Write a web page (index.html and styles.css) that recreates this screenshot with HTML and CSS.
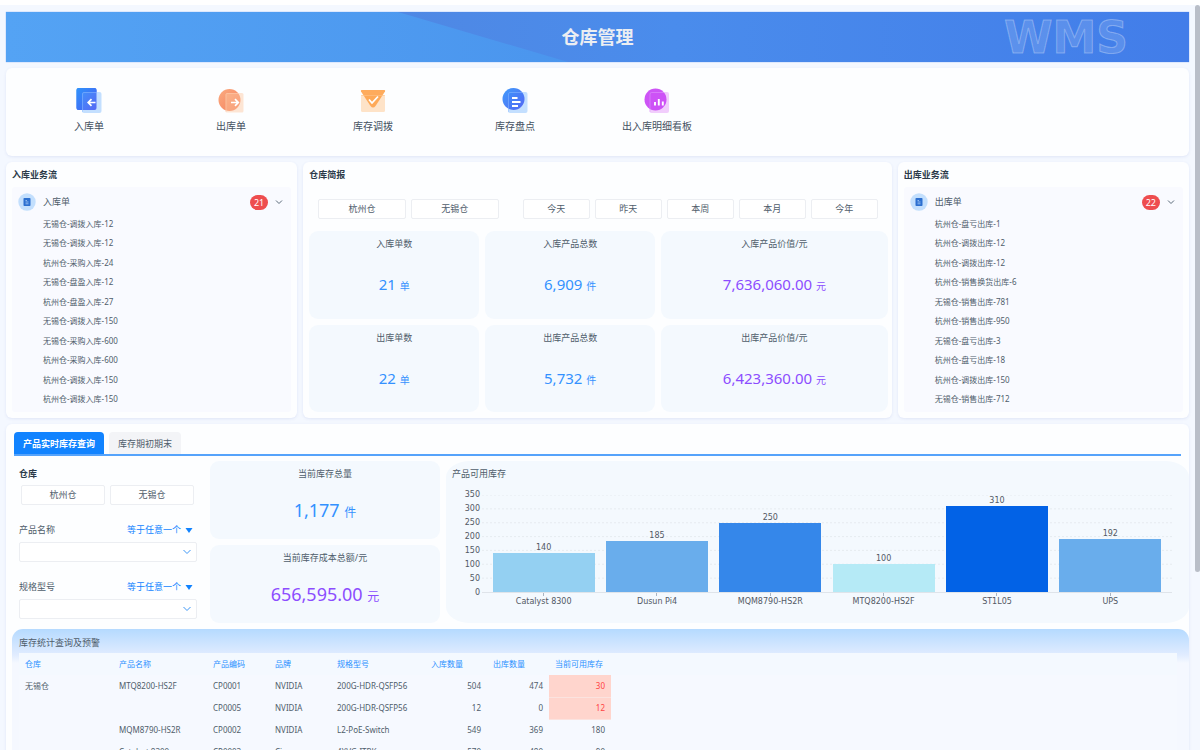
FILE: index.html
```html
<!DOCTYPE html>
<html lang="zh-CN">
  <head>
    <meta charset="utf-8" />
    <title>仓库管理</title>
    <link rel="stylesheet" href="styles.css">
  </head>
  <body>
    <main class="page">
      <header class="banner">
        <svg class="banner-bg" viewBox="0 0 1183 50" preserveAspectRatio="none" aria-hidden="true">
          <defs>
            <linearGradient id="shade" x1="0" x2="1" y1="0" y2="0">
              <stop offset="0" stop-color="#4f88e4" />
              <stop offset="0.35" stop-color="#4a8cec" />
              <stop offset="1" stop-color="#427de9" />
            </linearGradient>
          </defs>
          <path d="M392 0H1183V50H562Z" fill="url(#shade)" />
        </svg>
        <h1 class="banner-title">仓库管理</h1>
        <span class="banner-logo">WMS</span>
      </header>

      <nav class="card shortcuts">
        <a class="shortcut" href="#in">
          <svg width="26" height="26" viewBox="0 0 26 26">
            <defs>
              <linearGradient id="g1" x1="0" y1="0" x2="1" y2="1">
                <stop offset="0" stop-color="#2f93fb" />
                <stop offset="1" stop-color="#4a5cf3" />
              </linearGradient>
            </defs>
            <rect x="6" y="5" width="19.500" height="21" rx="2" fill="#c3dfff" />
            <rect x="0.500" y="1" width="20" height="22" rx="2" fill="url(#g1)" fill-opacity="0.9" />
            <path d="M0.500 3q0-2 2-2H18.500q2 0 2 2V5H8q-2 0-2 2V23H2.500q-2 0-2-2Z" fill="url(#g1)" />
            <path d="M6.500 25V7q0-1.500 1.500-1.500H20" fill="none" stroke="#8fbdff" stroke-opacity="0.5" />
            <path d="M19.500 15.500H12.500M15.500 12.200L12.200 15.500L15.500 18.800" fill="none" stroke="#fff" stroke-width="1.700" />
          </svg>
          <span>入库单</span>
        </a>
        <a class="shortcut" href="#out">
          <svg width="26" height="26" viewBox="0 0 26 26">
            <defs>
              <linearGradient id="g2" x1="0" y1="0" x2="1" y2="1">
                <stop offset="0" stop-color="#fbab80" />
                <stop offset="1" stop-color="#f47f5c" />
              </linearGradient>
            </defs>
            <circle cx="11.500" cy="13" r="11" fill="url(#g2)" />
            <rect x="7.500" y="6" width="18" height="19.500" rx="1.500" fill="#fcc7a0" fill-opacity="0.45" />
            <path d="M8 25V7.500q0-1 1-1H21" fill="none" stroke="#fdcfb4" stroke-opacity="0.5" />
            <path d="M13 15.500H20M17 12.200L20.300 15.500L17 18.800" fill="none" stroke="#fff" stroke-width="1.700" />
          </svg>
          <span>出库单</span>
        </a>
        <a class="shortcut" href="#transfer">
          <svg width="26" height="26" viewBox="0 0 26 26">
            <rect x="1" y="8" width="24" height="17" rx="1.500" fill="#fee3c8" />
            <path d="M1.500 3H24.500Q25.500 3 25 4.500L15.500 19Q13 22 10.500 19L1 4.500Q0.500 3 1.500 3Z" fill="#fea24a" fill-opacity="0.9" />
            <path d="M1 8.500H25" stroke="#fec48c" stroke-opacity="0.6" />
            <path d="M9 12.500L12 16L18 9.500" fill="none" stroke="#fff" stroke-width="1.800" />
          </svg>
          <span>库存调拨</span>
        </a>
        <a class="shortcut" href="#stocktake">
          <svg width="26" height="26" viewBox="0 0 26 26">
            <rect x="6" y="5" width="19.500" height="21" rx="2" fill="#c3dfff" />
            <circle cx="11.500" cy="12" r="11" fill="url(#g1)" fill-opacity="0.92" />
            <path d="M6.500 25V7q0-1.500 1.500-1.500H20" fill="none" stroke="#8fbdff" stroke-opacity="0.5" />
            <path d="M10 11H15.500M10 15H18.500M10 19H16" stroke="#fff" stroke-width="2" />
          </svg>
          <span>库存盘点</span>
        </a>
        <a class="shortcut" href="#board">
          <svg width="26" height="26" viewBox="0 0 26 26">
            <rect x="5.500" y="5" width="19.500" height="21" rx="2" fill="#f1cdfc" />
            <circle cx="11.500" cy="12.500" r="11" fill="#ca4bf6" fill-opacity="0.95" />
            <path d="M6 25V7q0-1.500 1.500-1.500H20" fill="none" stroke="#e2a0fb" stroke-opacity="0.5" />
            <path d="M11 18.500V15M14.800 18.500V12M18.800 18.500V14.500" stroke="#fff" stroke-width="1.900" />
          </svg>
          <span>出入库明细看板</span>
        </a>
      </nav>

      <div class="overview">
        <section class="card flow">
          <h2 class="card-title">入库业务流</h2>
          <div class="flow-panel">
            <div class="flow-head">
              <svg width="18" height="18" viewBox="0 0 18 18" aria-hidden="true">
                <circle cx="9" cy="9" r="8.700" fill="#c3dffd" />
                <rect x="5.500" y="5" width="7" height="8" rx="0.800" fill="#2c6fd0" />
                <path d="M7.500 7.500H9M7.500 9H10.500M7.500 10.800H10.500" stroke="#a9cdf8" stroke-width="0.800" />
              </svg>
              <span class="flow-name">入库单</span>
              <span class="badge">21</span>
              <button class="toggle" aria-label="收起入库单">
                <svg width="8" height="8" viewBox="0 0 8 8"><path d="M1 2.500L4 5.500L7 2.500" fill="none" stroke="#5b6a79" /></svg>
              </button>
            </div>
            <ul class="flow-list">
              <li>无锡仓-调拨入库-12</li>
              <li>无锡仓-调拨入库-12</li>
              <li>杭州仓-采购入库-24</li>
              <li>无锡仓-盘盈入库-12</li>
              <li>杭州仓-盘盈入库-27</li>
              <li>无锡仓-调拨入库-150</li>
              <li>无锡仓-采购入库-600</li>
              <li>杭州仓-采购入库-600</li>
              <li>杭州仓-调拨入库-150</li>
              <li>杭州仓-调拨入库-150</li>
            </ul>
          </div>
        </section>

        <section class="card brief">
          <h2 class="card-title">仓库简报</h2>
          <div class="brief-filters">
            <div class="btn-group btn-group-house">
              <button class="btn">杭州仓</button>
              <button class="btn">无锡仓</button>
            </div>
            <div class="btn-group btn-group-date">
              <button class="btn">今天</button>
              <button class="btn">昨天</button>
              <button class="btn">本周</button>
              <button class="btn">本月</button>
              <button class="btn">今年</button>
            </div>
          </div>
          <div class="brief-stats">
            <div class="stat">
              <h3>入库单数</h3>
              <p class="blue">21 <small>单</small></p>
            </div>
            <div class="stat">
              <h3>入库产品总数</h3>
              <p class="blue">6,909 <small>件</small></p>
            </div>
            <div class="stat">
              <h3>入库产品价值/元</h3>
              <p class="purple">7,636,060.00 <small>元</small></p>
            </div>
            <div class="stat">
              <h3>出库单数</h3>
              <p class="blue">22 <small>单</small></p>
            </div>
            <div class="stat">
              <h3>出库产品总数</h3>
              <p class="blue">5,732 <small>件</small></p>
            </div>
            <div class="stat">
              <h3>出库产品价值/元</h3>
              <p class="purple">6,423,360.00 <small>元</small></p>
            </div>
          </div>
        </section>

        <section class="card flow">
          <h2 class="card-title">出库业务流</h2>
          <div class="flow-panel">
            <div class="flow-head">
              <svg width="18" height="18" viewBox="0 0 18 18" aria-hidden="true">
                <circle cx="9" cy="9" r="8.700" fill="#c3dffd" />
                <rect x="5.500" y="5" width="7" height="8" rx="0.800" fill="#2c6fd0" />
                <path d="M7.500 7.500H9M7.500 9H10.500M7.500 10.800H10.500" stroke="#a9cdf8" stroke-width="0.800" />
              </svg>
              <span class="flow-name">出库单</span>
              <span class="badge">22</span>
              <button class="toggle" aria-label="收起出库单">
                <svg width="8" height="8" viewBox="0 0 8 8"><path d="M1 2.500L4 5.500L7 2.500" fill="none" stroke="#5b6a79" /></svg>
              </button>
            </div>
            <ul class="flow-list">
              <li>杭州仓-盘亏出库-1</li>
              <li>杭州仓-调拨出库-12</li>
              <li>杭州仓-调拨出库-12</li>
              <li>杭州仓-销售换货出库-6</li>
              <li>无锡仓-销售出库-781</li>
              <li>杭州仓-销售出库-950</li>
              <li>无锡仓-盘亏出库-3</li>
              <li>杭州仓-盘亏出库-18</li>
              <li>杭州仓-调拨出库-150</li>
              <li>无锡仓-销售出库-712</li>
            </ul>
          </div>
        </section>
      </div>

      <section class="card stock">
        <div class="tabs" role="tablist">
          <button class="tab active" role="tab" aria-selected="true">产品实时库存查询</button>
          <button class="tab" role="tab" aria-selected="false">库存期初期末</button>
        </div>

        <div class="stock-body">
          <form class="filters">
            <fieldset class="filter-house">
              <legend>仓库</legend>
              <div class="btn-row">
                <button type="button" class="btn">杭州仓</button>
                <button type="button" class="btn">无锡仓</button>
              </div>
            </fieldset>
            <div class="field">
              <div class="field-head">
                <label for="product">产品名称</label>
                <span class="match">
                  <select aria-label="产品名称匹配方式"><option>等于任意一个</option></select>
                  <svg width="8" height="5" viewBox="0 0 8 5"><path d="M0.500 0H7.500L4 5Z" fill="#1183ff" /></svg>
                </span>
              </div>
              <div class="picker">
                <select id="product"><option></option></select>
                <svg width="8" height="8" viewBox="0 0 8 8"><path d="M0.500 2L4 5.500L7.500 2" fill="none" stroke="#3d96f5" /></svg>
              </div>
            </div>
            <div class="field">
              <div class="field-head">
                <label for="model">规格型号</label>
                <span class="match">
                  <select aria-label="规格型号匹配方式"><option>等于任意一个</option></select>
                  <svg width="8" height="5" viewBox="0 0 8 5"><path d="M0.500 0H7.500L4 5Z" fill="#1183ff" /></svg>
                </span>
              </div>
              <div class="picker">
                <select id="model"><option></option></select>
                <svg width="8" height="8" viewBox="0 0 8 8"><path d="M0.500 2L4 5.500L7.500 2" fill="none" stroke="#3d96f5" /></svg>
              </div>
            </div>
          </form>

          <div class="totals">
            <div class="stat big">
              <h3>当前库存总量</h3>
              <p class="blue">1,177 <small>件</small></p>
            </div>
            <div class="stat big">
              <h3>当前库存成本总额/元</h3>
              <p class="purple">656,595.00 <small>元</small></p>
            </div>
          </div>

          <div class="chart">
            <h3>产品可用库存</h3>
            <div class="chart-area">
              <div class="axis-y">
                <span>350</span><span>300</span><span>250</span><span>200</span><span>150</span><span>100</span><span>50</span><span>0</span>
              </div>
              <div class="plot">
                <svg class="grid-lines" aria-hidden="true">
                  <g stroke="#e6ebf0" stroke-dasharray="2 2">
                    <line x1="0" x2="100%" y1="0" y2="0" />
                    <line x1="0" x2="100%" y1="14.300%" y2="14.300%" />
                    <line x1="0" x2="100%" y1="28.600%" y2="28.600%" />
                    <line x1="0" x2="100%" y1="42.900%" y2="42.900%" />
                    <line x1="0" x2="100%" y1="57.100%" y2="57.100%" />
                    <line x1="0" x2="100%" y1="71.400%" y2="71.400%" />
                    <line x1="0" x2="100%" y1="85.700%" y2="85.700%" />
                  </g>
                </svg>
                <div class="col"><b>140</b><i class="bar c2" style="height: 40%"></i></div>
                <div class="col"><b>185</b><i class="bar c3" style="height: 52.9%"></i></div>
                <div class="col"><b>250</b><i class="bar c4" style="height: 71.4%"></i></div>
                <div class="col"><b>100</b><i class="bar c1" style="height: 28.6%"></i></div>
                <div class="col"><b>310</b><i class="bar c5" style="height: 88.6%"></i></div>
                <div class="col"><b>192</b><i class="bar c3" style="height: 54.9%"></i></div>
              </div>
              <div class="axis-x">
                <span>Catalyst 8300</span><span>Dusun Pi4</span><span>MQM8790-HS2R</span><span>MTQ8200-HS2F</span><span>ST1L05</span><span>UPS</span>
              </div>
            </div>
          </div>
        </div>

        <div class="report">
          <h3>库存统计查询及预警</h3>
          <div class="table-wrap">
            <table>
              <colgroup>
                <col class="w-l"><col class="w-l"><col class="w-s"><col class="w-s"><col class="w-l"><col class="w-s"><col class="w-s"><col class="w-s"><col>
              </colgroup>
              <thead>
                <tr>
                  <th>仓库</th><th>产品名称</th><th>产品编码</th><th>品牌</th><th>规格型号</th><th>入库数量</th><th>出库数量</th><th>当前可用库存</th><td></td>
                </tr>
              </thead>
              <tbody>
                <tr>
                  <td>无锡仓</td><td>MTQ8200-HS2F</td><td>CP0001</td><td>NVIDIA</td><td>200G-HDR-QSFP56</td><td class="num">504</td><td class="num">474</td><td class="num warn">30</td><td></td>
                </tr>
                <tr>
                  <td></td><td></td><td>CP0005</td><td>NVIDIA</td><td>200G-HDR-QSFP56</td><td class="num">12</td><td class="num">0</td><td class="num warn">12</td><td></td>
                </tr>
                <tr>
                  <td></td><td>MQM8790-HS2R</td><td>CP0002</td><td>NVIDIA</td><td>L2-PoE-Switch</td><td class="num">549</td><td class="num">369</td><td class="num">180</td><td></td>
                </tr>
                <tr>
                  <td></td><td>Catalyst 8300</td><td>CP0003</td><td>Cisco</td><td>4XVG-ITRK</td><td class="num">570</td><td class="num">480</td><td class="num">90</td><td></td>
                </tr>
              </tbody>
            </table>
          </div>
        </div>
      </section>
    </main>
    <div class="scrollbar" aria-hidden="true"></div>
  </body>
</html>
```

FILE: styles.css
```css
* {
  box-sizing: border-box;
}
html,
body {
  margin: 0;
  padding: 0;
}
body {
  height: 100vh;
  overflow: hidden;
  background: #f4f8ff;
  border-top: 5px solid #fff;
  font-family: 'Noto Sans', 'Noto Sans CJK SC', sans-serif;
  font-size: 9px;
  line-height: 12px;
  color: #4f5d6b;
}
h1,
h2,
h3,
p,
ul {
  margin: 0;
  padding: 0;
  font-size: 9px;
  font-weight: 400;
}
button,
select {
  font: inherit;
  color: inherit;
  margin: 0;
  padding: 0;
  border: 0;
  background: none;
}
.page {
  display: flex;
  flex-direction: column;
  gap: 6px;
  padding: 7px 11px 0 6px;
}
.card {
  background: #fdfeff;
  border-radius: 6px;
  box-shadow: 0 1px 3px rgba(90, 110, 190, 0.12);
}
.scrollbar {
  position: absolute;
  top: 5px;
  right: 0;
  width: 5px;
  height: 75.6%;
  border-radius: 3px;
  background: #b9bec8;
}

/* banner */
.banner {
  position: relative;
  display: flex;
  align-items: center;
  justify-content: center;
  height: 50px;
  background: linear-gradient(90deg, #54a3f4, #4b96ee 45%, #427de9);
  box-shadow: 0 0 1px #6d9df0;
}
.banner-bg {
  position: absolute;
  width: 100%;
  height: 100%;
}
.banner-title {
  position: relative;
  font-size: 18px;
  line-height: 24px;
  font-weight: 700;
  color: #eceef2;
}
.banner-logo {
  position: absolute;
  right: 61px;
  top: 0;
  font-family: 'DejaVu Sans', sans-serif;
  font-size: 44px;
  line-height: 51px;
  font-weight: 700;
  color: rgba(255, 255, 255, 0.14);
  -webkit-text-stroke: 1px rgba(255, 255, 255, 0.3);
}

/* shortcuts */
.shortcuts {
  display: grid;
  grid-template-columns: repeat(8, 1fr);
  padding: 19px 35px 22px 12px;
}
.shortcut {
  display: flex;
  flex-direction: column;
  align-items: center;
  gap: 6px;
  font-size: 10px;
  line-height: 15px;
  color: #44515f;
  text-decoration: none;
}

/* overview */
.overview {
  display: grid;
  grid-template-columns: repeat(4, 1fr);
  gap: 6px;
}
.card-title {
  padding-top: 7px;
  font-weight: 700;
  color: #2b3a49;
}
.flow {
  padding: 0 6px 6px;
}
.flow-panel {
  margin-top: 6px;
  padding: 6px 6px 3px;
  background: #f9faff;
  border-radius: 3px;
}
.flow-head {
  display: flex;
  align-items: center;
  height: 18px;
}
.flow-name {
  flex: 1;
  padding-left: 7px;
}
.badge {
  padding: 0 4px;
  border-radius: 8px;
  background: #ee4d4f;
  color: #fff;
  font-size: 9px;
  line-height: 15px;
}
.toggle {
  display: flex;
  margin: 0 2px 0 7px;
}
.flow-list {
  display: grid;
  grid-auto-rows: 1fr;
  height: 198px;
  padding: 3px 0 0 25px;
  list-style: none;
  font-size: 8px;
}
.flow-list li {
  display: flex;
  align-items: center;
}

/* brief */
.brief {
  grid-column: span 2;
  display: flex;
  flex-direction: column;
  padding: 0 4px 6px 6px;
}
.brief-filters {
  display: flex;
  gap: 24px;
  padding: 18px 10px 12px 9px;
}
.btn-group {
  display: flex;
  gap: 5px;
}
.btn-group-house {
  flex: 181;
}
.btn-group-date {
  flex: 356;
}
.btn {
  flex: 1;
  height: 20px;
  border: 1px solid #eceef2;
  border-radius: 2px;
  background: #fff;
}
.brief-stats {
  flex: 1;
  display: grid;
  grid-template-columns: 3fr 3fr 4fr;
  grid-auto-rows: 1fr;
  gap: 6px;
}
.stat {
  display: flex;
  flex-direction: column;
  padding: 7px 6px;
  border-radius: 9px;
  background: #f4f9fe;
  text-align: center;
}
.stat p {
  margin-top: 22px;
  font-size: 15px;
  line-height: 24px;
}
.stat small {
  font-size: 10px;
}
.stat.big p {
  margin-top: 18px;
  font-size: 18px;
}
.stat.big small {
  font-size: 12px;
}
.blue {
  color: #3391ff;
}
.purple {
  color: #8c4dff;
}

/* stock */
.stock {
  padding: 8px 0 0 8px;
}
.tabs {
  display: flex;
  gap: 5px;
  margin-right: 8px;
  border-bottom: 2px solid #55a3fb;
}
.tab {
  height: 22px;
  padding: 1px 9px 0;
  border-radius: 4px 4px 0 0;
  background: #f3f4f7;
}
.tab.active {
  background: #1183ff;
  color: #fff;
  font-weight: 700;
}
.stock-body {
  display: grid;
  grid-template-columns: 190px 230px 1fr;
  gap: 6px;
  height: 167px;
  padding: 5px 0 0;
}
.filters {
  display: flex;
  flex-direction: column;
  gap: 19px;
  padding: 7px 7px 0 5px;
}
.filter-house {
  margin: 0;
  padding: 0 3px 0 2px;
  border: 0;
}
.filter-house legend {
  margin-left: -2px;
  padding: 0;
  font-weight: 700;
  color: #2b3a49;
}
.btn-row {
  display: flex;
  gap: 5px;
  padding-top: 5px;
}
.field-head {
  display: flex;
  justify-content: space-between;
  height: 12px;
  margin-bottom: 6px;
}
.match {
  display: flex;
  align-items: center;
  gap: 3px;
  padding-right: 4px;
  color: #1183ff;
}
.match select,
.picker select {
  appearance: none;
}
.picker {
  position: relative;
}
.picker select {
  display: block;
  width: 100%;
  height: 20px;
  border: 1px solid #eceef2;
  border-radius: 2px;
  background: #fff;
}
.picker svg {
  position: absolute;
  right: 6px;
  top: 6px;
  pointer-events: none;
}
.totals {
  display: grid;
  grid-auto-rows: 1fr;
  gap: 6px;
}
.chart {
  padding: 7px 17px 0 6px;
  border-radius: 24px / 16px;
  background: #f4f9fe;
}
.chart-area {
  display: grid;
  grid-template-columns: 30px 1fr;
  padding-top: 15px;
  font-family: 'DejaVu Sans', sans-serif;
  font-size: 8px;
  color: #525864;
}
.axis-y {
  display: flex;
  flex-direction: column;
  justify-content: space-between;
  margin: -6px 0;
  padding-right: 2px;
  text-align: right;
}
.plot {
  position: relative;
  display: flex;
  height: 98px;
  padding: 0 5px;
  border-bottom: 1px solid #dfe4ea;
}
.grid-lines {
  position: absolute;
  left: 0;
  top: 0;
  width: 100%;
  height: 100%;
}
.col {
  position: relative;
  flex: 1;
  display: flex;
  flex-direction: column;
  justify-content: flex-end;
  align-items: center;
}
.col b {
  font-weight: 400;
  line-height: 10px;
}
.bar {
  width: 90%;
}
.c1 {
  background: #b5eaf6;
}
.c2 {
  background: #94d0f2;
}
.c3 {
  background: #69adec;
}
.c4 {
  background: #3587ea;
}
.c5 {
  background: #0262e6;
}
.axis-x {
  grid-column: 2;
  display: flex;
  padding: 0 5px;
}
.axis-x span {
  flex: 1;
  display: flex;
  flex-direction: column;
  align-items: center;
}
.axis-x span::before {
  content: '';
  width: 1px;
  height: 3px;
  background: #a9b4c2;
}

/* report */
.report {
  height: 200px;
  margin: 6px 0 0 -2px;
  padding: 8px 12px 0 7px;
  border-radius: 11px 11px 0 0;
  background: linear-gradient(#b5daff, #e1ecff 26px, #f5f8ff 34px);
}
.table-wrap {
  margin-top: 4px;
}
table {
  width: 100%;
  table-layout: fixed;
  border-collapse: collapse;
  font-size: 8px;
  background: #f6f9ff;
}
.w-l {
  width: 94px;
}
.w-s {
  width: 62px;
}
th,
td {
  height: 22px;
  padding: 0 6px;
  text-align: left;
  white-space: nowrap;
}
thead tr {
  background: #f4f9ff;
}
th {
  font-weight: 400;
  color: #2b90ff;
}
.num {
  text-align: right;
}
.warn {
  background: #ffd5cd;
  border-bottom: 1px solid #fbe3df;
  color: #ff4444;
}
```
